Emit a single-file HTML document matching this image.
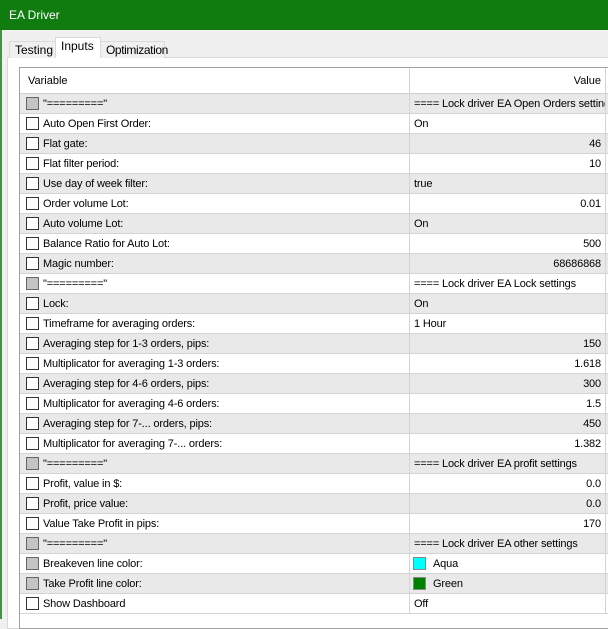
<html><head><style>
body{margin:0;width:608px;height:619px;overflow:hidden;background:#f0f0f0;font-family:"Liberation Sans",sans-serif;font-size:11px;color:#000;position:relative}
.title{position:absolute;left:0;top:0;width:608px;height:30px;background:#107c10;color:#fff;font-size:12px}
.title span{position:absolute;left:9px;top:8px}
.lb{position:absolute;left:0;top:30px;width:2px;height:589px;background:#3a9a3a}
.tab{position:absolute;top:40px;height:17px;border:1px solid #d9d9d9;border-bottom:none;background:#f0f0f0;padding:0 5px;line-height:17px;white-space:nowrap;font-size:12px}
.panel{position:absolute;left:7px;top:57px;width:610px;height:570px;border:1px solid #d9d9d9;background:#fff}
.tbl{position:absolute;left:19px;top:67px;width:600px;height:560px;border:1px solid #a0a0a0;background:#fff;overflow:hidden}
.hdr{position:absolute;left:0;top:0;width:600px;height:25px;border-bottom:1px solid #d0d0d0}
.row{position:absolute;left:0;width:600px;height:19px;border-bottom:1px solid #d4d4d4;white-space:nowrap}
.g{background:#e9e9e9}
.cb{position:absolute;left:6px;top:3px;width:11px;height:11px;border:1px solid #333;background:#fff}
.cb.f{background:#c4c4c4;border-color:#666}
.n{position:absolute;left:23px;top:4px;letter-spacing:-0.15px}
.v{position:absolute;left:389px;top:0;width:195px;height:19px;border-left:1px solid #d4d4d4;border-right:1px solid #d4d4d4;overflow:hidden}
.v span{position:absolute;left:4px;top:4px;white-space:nowrap;letter-spacing:-0.15px}
.v .r{left:auto;right:4px}
.sw{position:absolute;left:2px;top:3px;width:11px;height:11px;border:1px solid #888}
</style></head><body>
<div class="title"><span>EA Driver</span></div>
<div class="lb"></div>
<div class="panel"></div>
<div class="tab" style="left:9px;top:41px;height:16px;width:35px;line-height:16px">Testing</div>
<div class="tab" style="left:55px;top:37px;height:20px;background:#fff;z-index:2;width:34px">Inputs</div>
<div class="tab" style="left:100px;top:41px;height:16px;width:53px;line-height:16px;letter-spacing:-0.4px">Optimization</div>
<div class="tbl">
<div class="hdr"><span style="position:absolute;left:8px;top:7px">Variable</span><div style="position:absolute;left:389px;top:0;width:195px;height:25px;border-left:1px solid #d4d4d4;border-right:1px solid #d4d4d4"><span style="position:absolute;right:4px;top:7px">Value</span></div></div>
<div id="rows"></div>
</div>
<script>
var d=[["\"=========\"","==== Lock driver EA Open Orders settings",0,1],
["Auto Open First Order:","On",0,0],["Flat gate:","46",1,0],["Flat filter period:","10",1,0],["Use day of week filter:","true",0,0],
["Order volume Lot:","0.01",1,0],["Auto volume Lot:","On",0,0],["Balance Ratio for Auto Lot:","500",1,0],["Magic number:","68686868",1,0],
["\"=========\"","==== Lock driver EA Lock settings",0,1],["Lock:","On",0,0],["Timeframe for averaging orders:","1 Hour",0,0],
["Averaging step for 1-3 orders, pips:","150",1,0],["Multiplicator for averaging 1-3 orders:","1.618",1,0],["Averaging step for 4-6 orders, pips:","300",1,0],
["Multiplicator for averaging 4-6 orders:","1.5",1,0],["Averaging step for 7-... orders, pips:","450",1,0],["Multiplicator for averaging 7-... orders:","1.382",1,0],
["\"=========\"","==== Lock driver EA profit settings",0,1],["Profit, value in $:","0.0",1,0],["Profit, price value:","0.0",1,0],["Value Take Profit in pips:","170",1,0],
["\"=========\"","==== Lock driver EA other settings",0,1],["Breakeven line color:","Aqua",2,1],["Take Profit line color:","Green",3,1],["Show Dashboard","Off",0,0]];
var h="";d.forEach(function(r,i){var v;
if(r[2]==2||r[2]==3){v='<div class="sw" style="left:3px;background:'+(r[2]==2?'#00ffff':'#008000')+'"></div><span style="left:23px">'+r[1]+'</span>';}
else v='<span'+(r[2]?' class="r"':'')+'>'+r[1]+'</span>';
h+='<div class="row'+(i%2==0?' g':'')+'" style="top:'+(26+20*i)+'px"><div class="cb'+(r[3]?' f':'')+'"></div><span class="n">'+r[0]+'</span><div class="v">'+v+'</div></div>';});
document.getElementById("rows").innerHTML=h;
</script>
</body></html>
